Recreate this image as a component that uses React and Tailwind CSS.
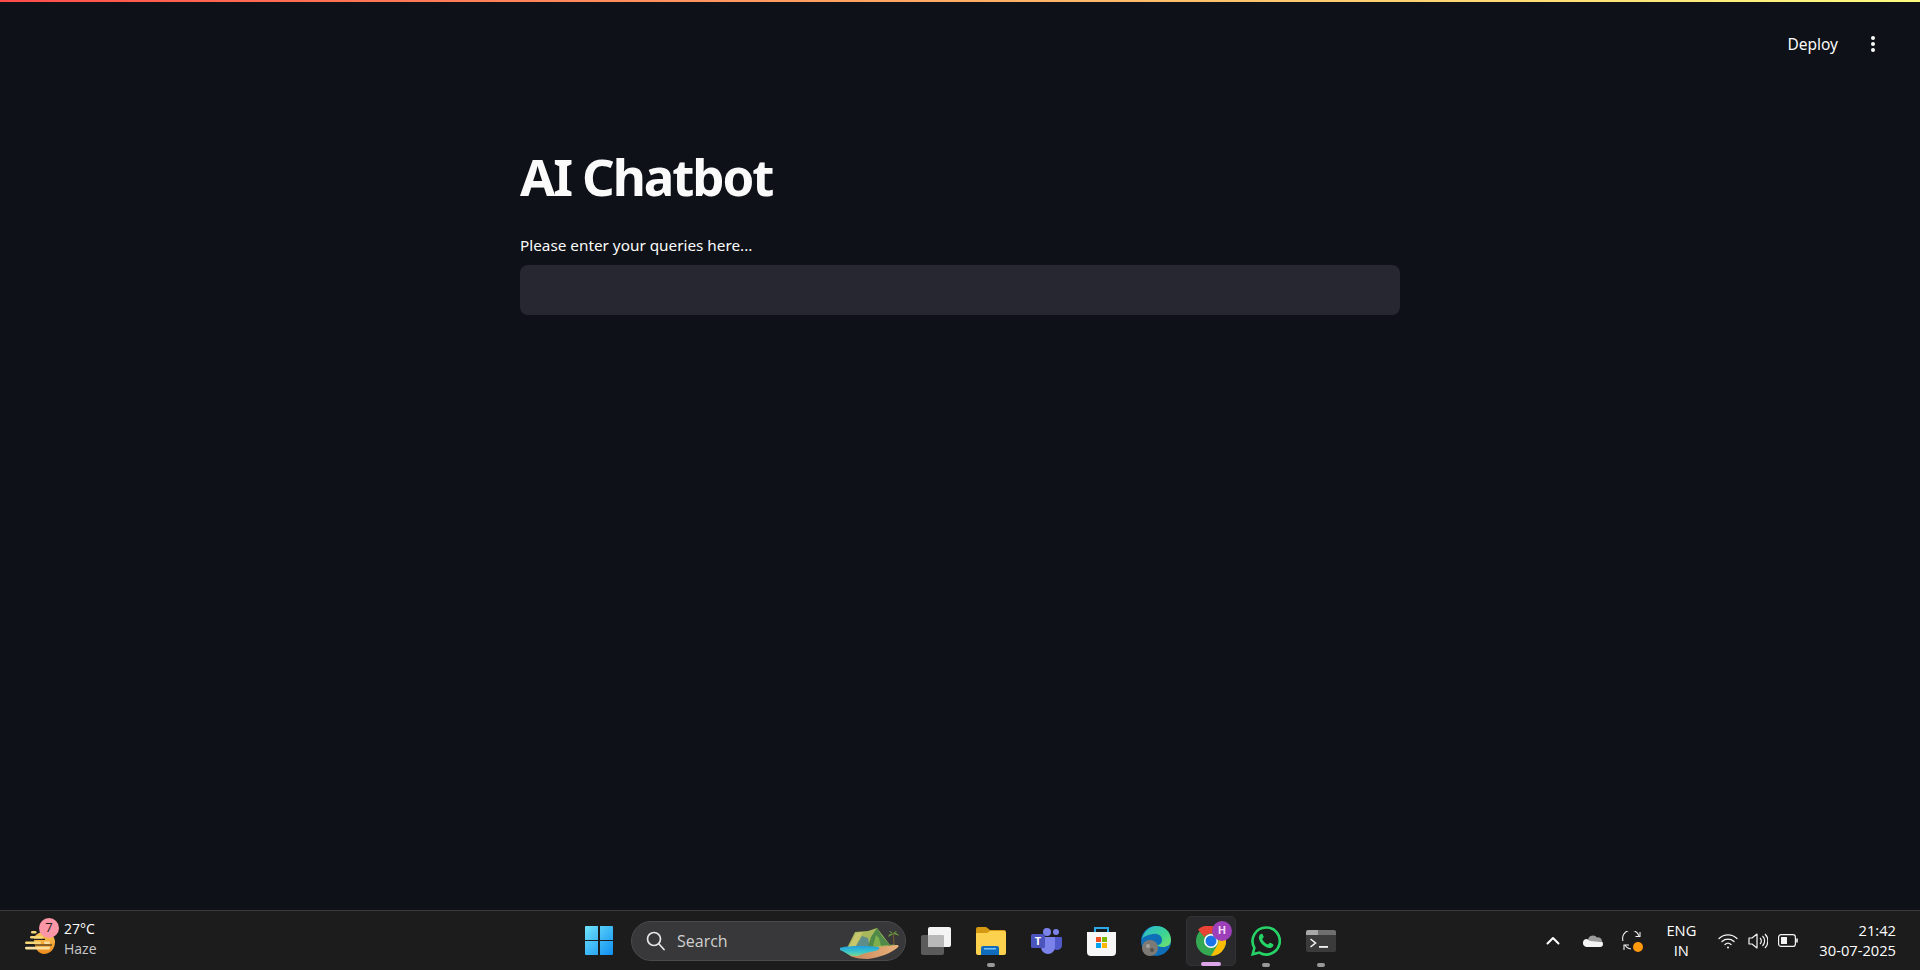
import React from 'react';

const WindowsLogo = () => (
    <svg width="28" height="29" viewBox="0 0 28 29">
        <defs>
            <linearGradient id="win" x1="0" y1="0" x2="1" y2="1">
                <stop offset="0" stopColor="#6fe3fb" />
                <stop offset="1" stopColor="#0f8ff0" />
            </linearGradient>
        </defs>
        <path fill="url(#win)" d="M1 0h12v14H0V1a1 1 0 0 1 1-1zM15 0h12a1 1 0 0 1 1 1v13H15zM0 15h13v14H1a1 1 0 0 1-1-1zM15 15h13v13a1 1 0 0 1-1 1H15z" />
    </svg>
);

const Island = () => (
    <svg width="60" height="32" viewBox="0 0 60 32">
        <defs>
            <linearGradient id="sea" x1="0" y1="0" x2="0" y2="1">
                <stop offset="0" stopColor="#1f9fdc" />
                <stop offset="0.6" stopColor="#3cc6c8" />
                <stop offset="1" stopColor="#7fd68e" />
            </linearGradient>
            <linearGradient id="sand" x1="0" y1="0" x2="1" y2="0">
                <stop offset="0" stopColor="#c9835a" />
                <stop offset="1" stopColor="#e8b27a" />
            </linearGradient>
        </defs>
        <path fill="#a9b85a" d="M7 20l8-16 13-1 9-3 13 17-8 3z" />
        <path fill="#5f8d8a" d="M16 18l6-10 6 2 2 9z" />
        <path fill="#c9c76e" d="M9 19l7-14 7-1-8 15z" />
        <path fill="#4f8a4a" d="M28 19l3-10 6-9 5 8 8 9z" />
        <path fill="#7fae4c" d="M33 18l3-11 3 3 2 8z" />
        <path stroke="#6d5a32" strokeWidth="1.200" fill="none" d="M54 18c0-4-.3-8-.8-12" />
        <path fill="#6f9a3a" d="M53 6c-3-1-4 0-5 3 2-1 4-2 5-3zm0 0c2-2 5-1 6 2-2-1-4-2-6-2zm0 0c-1-2-2-3-4-3 1 1 2 2 4 3zm0 0c1-2 2-3 4-3-1 1-2 2-4 3z" />
        <path fill="#5d8f3e" d="M48 18c2-2 7-2 10 0z" />
        <path fill="url(#sand)" d="M8 19h32c6-1 14-2 17-2 2 0 2 2 0 3-6 5-16 9-29 11-8 0-14-1-18-3z" />
        <path fill="url(#sea)" d="M1 19.500c8-2 26-2 37-.5 3 1 1 3-3 4-7 1-13 3-17 5-3 0-7 0-9-1-3-2-6-4-9-5-1-1-.5-2 1-2.500z" />
    </svg>
);

const TaskView = () => (
    <svg width="30" height="28" viewBox="0 0 30 28">
        <rect x="0" y="8" width="23" height="20" rx="2" fill="#5b5b5b" />
        <rect x="7" y="0" width="23" height="20" rx="2" fill="#f4f4f4" />
        <rect x="7" y="8" width="16" height="12" rx="1" fill="#b9b9b9" />
    </svg>
);

const Explorer = () => (
    <svg width="30" height="28" viewBox="0 0 30 28">
        <path fill="#d69a12" d="M0 2a2 2 0 0 1 2-2h8l4 3h14a2 2 0 0 1 2 2v6H0z" />
        <path fill="#fcd14d" d="M0 6h11l3-2h14a2 2 0 0 1 2 2v20a2 2 0 0 1-2 2H2a2 2 0 0 1-2-2z" />
        <path fill="#0f6cbd" d="M5 28v-7a2 2 0 0 1 2-2h14a2 2 0 0 1 2 2v7z" />
        <rect x="8" y="21" width="12" height="1.500" fill="#7cc4f5" />
    </svg>
);

const Teams = () => (
    <svg width="31" height="26" viewBox="0 0 31 26">
        <circle cx="25" cy="4" r="3" fill="#7b83eb" />
        <path fill="#5059c9" d="M20 9h10a1 1 0 0 1 1 1v7a5 5 0 0 1-9 3z" />
        <circle cx="16" cy="4" r="4" fill="#7b83eb" />
        <path fill="#7b83eb" d="M9 9h14a1 1 0 0 1 1 1v9a7 7 0 0 1-14 0z" />
        <rect x="0" y="6" width="14" height="14" rx="1.500" fill="#4b53bc" />
        <text x="7" y="17" textAnchor="middle" fontFamily="Open Sans, sans-serif" fontSize="11" fontWeight="700" fill="#fff">T</text>
    </svg>
);

const Store = () => (
    <svg width="29" height="30" viewBox="0 0 29 30">
        <path fill="none" stroke="#2aa9e6" strokeWidth="2" d="M8 8V2h13v6" />
        <path fill="#f7f7f7" d="M0 6h29v20a4 4 0 0 1-4 4H4a4 4 0 0 1-4-4z" />
        <rect x="9" y="11" width="5" height="5" fill="#f25022" />
        <rect x="15" y="11" width="5" height="5" fill="#7fba00" />
        <rect x="9" y="17" width="5" height="5" fill="#00a4ef" />
        <rect x="15" y="17" width="5" height="5" fill="#ffb900" />
    </svg>
);

const Edge = () => (
    <svg width="30" height="30" viewBox="0 0 30 30">
        <defs>
            <linearGradient id="edge" x1="0" y1="0" x2="1" y2="1">
                <stop offset="0" stopColor="#2bb5d8" />
                <stop offset="0.6" stopColor="#3ed68f" />
                <stop offset="1" stopColor="#7be06a" />
            </linearGradient>
        </defs>
        <circle cx="15" cy="15" r="15" fill="#0e6fb8" />
        <path fill="url(#edge)" d="M1 13C3 5 9 0 15 0c9 0 15 6 15 14 0 5-4 7-8 7-3 0-6-1-6-2 3 0 5-2 5-5 0-5-5-7-9-6-5 1-9 2-11 5z" />
        <circle cx="9" cy="22" r="8" fill="#7d7a76" />
        <circle cx="7" cy="20" r="2" fill="#a8a39c" />
        <circle cx="11" cy="24" r="2" fill="#55524e" />
    </svg>
);

const Chrome = () => (
    <svg width="30" height="30" viewBox="0 0 30 30">
        <circle cx="15" cy="15" r="15" fill="#34a853" />
        <path fill="#ea4335" d="M15 0a15 15 0 0 1 13 7.500H15a7.500 7.500 0 0 0-6.500 3.750L2 3.500A15 15 0 0 1 15 0z" />
        <path fill="#fbbc04" d="M28 7.500A15 15 0 0 1 15 30l6.500-11.250A7.500 7.500 0 0 0 21.500 11.250z" />
        <circle cx="15" cy="15" r="7" fill="#fff" />
        <circle cx="15" cy="15" r="5.500" fill="#1a73e8" />
    </svg>
);

const WhatsApp = () => (
    <svg width="30" height="30" viewBox="0 0 30 30">
        <path fill="none" stroke="#25d366" strokeWidth="2.600" d="M15 1.500a13.500 13.500 0 0 0-11.600 20.300L1.700 28.300l6.700-1.700A13.500 13.500 0 1 0 15 1.500z" />
        <path fill="#25d366" d="M10.800 7.800c-.6 0-1.500.3-2 1-.7.900-1.100 2.100-.9 3.500.4 2.400 1.800 4.600 3.800 6.500 2.100 1.900 4.500 3 6.700 3.200 1.500.1 2.800-.5 3.500-1.400.5-.6.600-1.500.5-2.100-.1-.3-3-1.800-3.500-1.800-.4 0-1.200 1.500-1.700 1.600-.8.200-2.700-1-3.800-2.100-1-1-2.100-2.700-2-3.400.1-.5 1.300-1.300 1.300-1.800 0-.4-1.200-3.100-1.500-3.200-.1 0-.2 0-.4 0z" />
    </svg>
);

const Terminal = () => (
    <svg width="30" height="22" viewBox="0 0 30 22">
        <path fill="#3b3b3b" d="M0 5h30v15a2 2 0 0 1-2 2H2a2 2 0 0 1-2-2z" />
        <path fill="#a8a8a8" d="M2 0h10v5H0V2a2 2 0 0 1 2-2z" />
        <path fill="#6f6f6f" d="M12 0h16a2 2 0 0 1 2 2v3H12z" />
        <path fill="none" stroke="#f2f2f2" strokeWidth="1.600" d="M4.500 9l5 4-5 4" />
        <rect x="13" y="16" width="9" height="1.800" fill="#f2f2f2" />
    </svg>
);

const Weather = () => (
    <svg width="30" height="30" viewBox="0 0 30 30">
        <defs>
            <linearGradient id="haze" x1="0" y1="0" x2="0" y2="1">
                <stop offset="0" stopColor="#f9c95a" />
                <stop offset="1" stopColor="#ec8a1c" />
            </linearGradient>
        </defs>
        <path fill="url(#haze)" d="M9 14c0-5 6-9 12-8 6 1 9 6 9 10 0 7-5 12-11 12-6 0-10-7-10-14z" />
        <path stroke="#1c1c1c" strokeWidth="1.200" d="M4 13.300h16M0 19h27" />
        <rect x="6" y="5" width="5.500" height="2.400" rx="1.200" fill="#f5d77a" />
        <rect x="5" y="10" width="13" height="2.600" rx="1.300" fill="#f5d77a" />
        <rect x="0" y="15.400" width="16" height="2.600" rx="1.300" fill="#f5d77a" />
        <rect x="19" y="15.400" width="6" height="2.600" rx="1.300" fill="#f7dfa0" />
        <rect x="0" y="20.800" width="25" height="2.600" rx="1.300" fill="#f7dfa0" />
    </svg>
);

const centerApps = [
    { name: 'explorer', icon: <Explorer />, dot: true },
    { name: 'teams', icon: <Teams /> },
    { name: 'store', icon: <Store /> },
    { name: 'edge', icon: <Edge /> },
];

const TaskButton = ({ children, dot }) => (
    <div className="relative flex h-[50px] w-[50px] items-center justify-center">
        {children}
        {dot && <span className="absolute bottom-[-1px] h-[4px] w-[8px] rounded-full bg-[#9a9a9a]"></span>}
    </div>
);

const Taskbar = () => (
    <div className="grid h-[60px] grid-cols-[1fr_auto_1fr] items-center border-t border-[#3a3a3a] bg-[#1c1c1c] text-white" style={{ fontFamily: '"Open Sans", "Noto Sans", sans-serif' }}>
        <div className="flex items-center pl-[25px]">
            <div className="relative h-[30px] w-[30px]">
                <Weather />
                <span className="absolute left-[14px] top-[-8px] flex h-[20px] w-[20px] items-center justify-center rounded-full bg-[#fb96a6] text-[13px] text-[#1c1c1c]">7</span>
            </div>
            <div className="ml-[9px] mb-[3px] text-[14px] leading-[20px]">
                <div>27°C</div>
                <div className="text-[#c8c8c8]">Haze</div>
            </div>
        </div>

        <div className="flex items-center">
            <TaskButton><WindowsLogo /></TaskButton>
            <div className="relative ml-[7px] mr-[5px] flex h-[40px] w-[275px] items-center rounded-full border border-[#4a4a4c] bg-[#38383a] pl-[14px]">
                <svg width="19" height="20" viewBox="0 0 19 20" fill="none" stroke="#e6e6e6" strokeWidth="1.700" strokeLinecap="round">
                    <circle cx="8" cy="8" r="6.500" />
                    <path d="M13 13l5 5.500" />
                </svg>
                <span className="ml-[12px] text-[16px] text-[#d0d0d0]">Search</span>
                <div className="absolute right-[5px] top-[6px]"><Island /></div>
            </div>
            <div className="flex items-center gap-[5px]">
                <TaskButton><TaskView /></TaskButton>
                {centerApps.map((app) => (
                    <TaskButton key={app.name} dot={app.dot}>{app.icon}</TaskButton>
                ))}
                <div className="relative flex h-[50px] w-[50px] items-center justify-center rounded-[5px] border border-[#333336] bg-[#2a2a2d]">
                    <Chrome />
                    <span className="absolute left-[25px] top-[4px] flex h-[20px] w-[20px] items-center justify-center rounded-full bg-[#9c3fb8] text-[11px] font-bold text-[#f4d8fa]">H</span>
                    <span className="absolute bottom-[-1px] h-[4px] w-[20px] rounded-full bg-[#dda6e8]"></span>
                </div>
                <TaskButton dot><WhatsApp /></TaskButton>
                <TaskButton dot><Terminal /></TaskButton>
            </div>
        </div>

        <div className="flex items-center justify-end pr-[24px]">
            <svg width="14" height="9" viewBox="0 0 14 9" fill="none" stroke="#fff" strokeWidth="2" strokeLinecap="round" strokeLinejoin="round">
                <path d="M1.500 7.500L7 2l5.500 5.500" />
            </svg>
            <svg className="ml-[23px]" width="20" height="13" viewBox="0 0 20 13">
                <path fill="#9c9c9c" d="M5 6a5 5 0 0 1 9-2.500A4 4 0 0 1 19 7H6z" />
                <path fill="#f4f4f4" d="M4 5a3.500 3.500 0 0 0-4 3.500A4 4 0 0 0 3.500 13H17a3 3 0 0 0 3-3c0-1-.5-2-1-2.500L7 7z" />
            </svg>
            <div className="relative ml-[19px] h-[20px] w-[20px]">
                <svg width="20" height="20" viewBox="0 0 20 20" fill="none" stroke="#f0f0f0" strokeWidth="1.100">
                    <path d="M1 10A8 8 0 0 1 17 5" />
                    <path d="M18 1v4.500h-4.500" />
                    <path d="M3 14a8 8 0 0 0 6 4" />
                    <path d="M2 19v-5h5" />
                </svg>
                <span className="absolute right-[-1px] bottom-[-1px] h-[10px] w-[10px] rounded-full bg-[#ff9a0d]"></span>
            </div>
            <div className="ml-[19px] mb-[2px] w-[40px] text-center text-[14.7px] leading-[20px]">
                <div>ENG</div>
                <div>IN</div>
            </div>
            <svg className="ml-[17px]" width="20" height="16" viewBox="0 0 20 16" fill="none" stroke="#f4f4f4" strokeWidth="1.300" strokeLinecap="round">
                <path d="M1 5.500a13 13 0 0 1 18 0" />
                <path d="M4 8.500a9 9 0 0 1 12 0" />
                <path d="M7 11.500a4.500 4.500 0 0 1 6 0" />
                <circle cx="10" cy="14.500" r="1" fill="#f4f4f4" stroke="none" />
            </svg>
            <svg className="ml-[10px]" width="20" height="18" viewBox="0 0 20 18" fill="none" stroke="#f4f4f4" strokeWidth="1.200">
                <path d="M1 6v6h3l5 4V2L4 6z" strokeLinejoin="round" />
                <path d="M12 6a4 4 0 0 1 0 6" />
                <path d="M14.500 4a7 7 0 0 1 0 10" />
                <path d="M17 2a10 10 0 0 1 0 14" />
            </svg>
            <svg className="ml-[10px]" width="20" height="13" viewBox="0 0 20 13" fill="none" stroke="#f4f4f4" strokeWidth="1.200">
                <rect x=".6" y=".6" width="16.800" height="11.800" rx="2.500" />
                <rect x="3" y="3" width="6" height="7" fill="#f4f4f4" stroke="none" />
                <path d="M19 4.500v4" strokeWidth="1.600" />
            </svg>
            <div className="ml-[21px] mb-[2px] text-right text-[14.7px] leading-[20px]">
                <div>21:42</div>
                <div>30-07-2025</div>
            </div>
        </div>
    </div>
);

const App = () => {
    return (
        <div className="flex h-screen flex-col bg-[#0e1117] text-[#fafafa]" style={{ fontFamily: '"Noto Sans", sans-serif' }}>
            <div className="h-[2px] bg-gradient-to-r from-[#ff4b4b] to-[#fffd80]"></div>
            <div className="flex h-[84px] items-center justify-end">
                <span className="mt-[2px] text-[15.5px]">Deploy</span>
                <svg className="ml-[32px] mr-[44px]" width="6" height="18" viewBox="0 0 6 18" fill="#fafafa">
                    <circle cx="3" cy="3" r="2" />
                    <circle cx="3" cy="9" r="2" />
                    <circle cx="3" cy="15" r="2" />
                </svg>
            </div>
            <main className="mx-auto w-[880px] flex-1">
                <h1 className="mt-[48px] text-[51px] font-bold leading-[84px] tracking-[-2.1px]">AI Chatbot</h1>
                <label className="mt-[17px] block text-[15.3px] leading-[20px]">Please enter your queries here...</label>
                <input className="mt-[10px] block h-[50px] w-full rounded-[8px] bg-[#262730] px-4 text-[16px] outline-none" />
            </main>
            <Taskbar />
        </div>
    );
};

export default App;
